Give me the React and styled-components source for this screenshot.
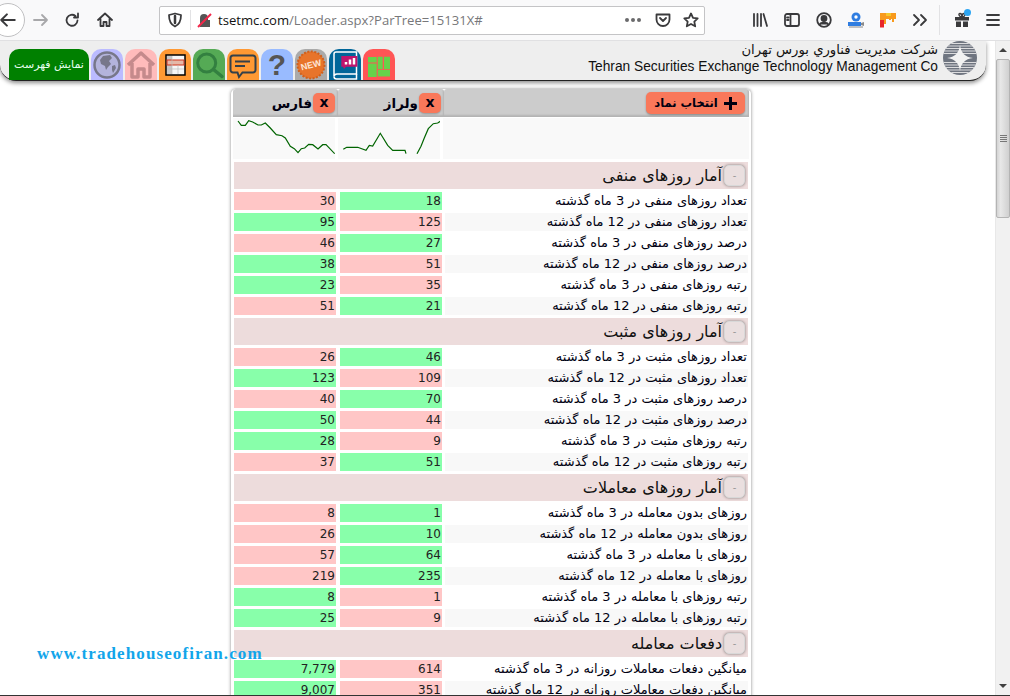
import styled, { createGlobalStyle } from 'styled-components'

const Global = createGlobalStyle`
    html, body {
        margin: 0;
        padding: 0;
        height: 100%;
        overflow: hidden;
        background: #fff;
        font-family: "DejaVu Sans", sans-serif;
    }
`

const sections = [
    {
        title: 'آمار روزهای منفی',
        rows: [
            ['تعداد روزهای منفی در 3 ماه گذشته', '18', 'g', '30', 'r'],
            ['تعداد روزهای منفی در 12 ماه گذشته', '125', 'r', '95', 'g'],
            ['درصد روزهای منفی در 3 ماه گذشته', '27', 'g', '46', 'r'],
            ['درصد روزهای منفی در 12 ماه گذشته', '51', 'r', '38', 'g'],
            ['رتبه روزهای منفی در 3 ماه گذشته', '35', 'r', '23', 'g'],
            ['رتبه روزهای منفی در 12 ماه گذشته', '21', 'g', '51', 'r'],
        ],
    },
    {
        title: 'آمار روزهای مثبت',
        rows: [
            ['تعداد روزهای مثبت در 3 ماه گذشته', '46', 'g', '26', 'r'],
            ['تعداد روزهای مثبت در 12 ماه گذشته', '109', 'r', '123', 'g'],
            ['درصد روزهای مثبت در 3 ماه گذشته', '70', 'g', '40', 'r'],
            ['درصد روزهای مثبت در 12 ماه گذشته', '44', 'r', '50', 'g'],
            ['رتبه روزهای مثبت در 3 ماه گذشته', '9', 'r', '28', 'g'],
            ['رتبه روزهای مثبت در 12 ماه گذشته', '51', 'g', '37', 'r'],
        ],
    },
    {
        title: 'آمار روزهای معاملات',
        rows: [
            ['روزهای بدون معامله در 3 ماه گذشته', '1', 'g', '8', 'r'],
            ['روزهای بدون معامله در 12 ماه گذشته', '10', 'g', '26', 'r'],
            ['روزهای با معامله در 3 ماه گذشته', '64', 'g', '57', 'r'],
            ['روزهای با معامله در 12 ماه گذشته', '235', 'g', '219', 'r'],
            ['رتبه روزهای با معامله در 3 ماه گذشته', '1', 'r', '8', 'g'],
            ['رتبه روزهای با معامله در 12 ماه گذشته', '9', 'r', '25', 'g'],
        ],
    },
    {
        title: 'دفعات معامله',
        rows: [
            ['میانگین دفعات معاملات روزانه در 3 ماه گذشته', '614', 'r', '7,779', 'g'],
            ['میانگین دفعات معاملات روزانه در 12 ماه گذشته', '351', 'r', '9,007', 'g'],
        ],
    },
]

const farsPoints = '4,2 7.3,6.3 11.3,6.3 14.7,1.7 18.7,3 24,6 27.3,6 31.3,4 36.3,9 42.3,15.7 48,16.7 51.3,19 56.3,27.3 60.3,29.7 64,33.7 67.3,29.7 70.7,29 74.7,25.3 78.7,25.7 84,30 88.7,25.7 92,25.7 100.7,34.7'
const volrazA = '4.3,30.3 7.7,28.3 18.7,28.3 27,31.3 30.3,26.3 33.7,27 41.3,14.3 48.7,26.3 53.7,31.3 66,31.3 67,34.7'
const volrazB = '78,34.7 82,27.3 85.3,19 89.3,9.7 94.3,4.7 98.7,4 101.3,2.3'

const Page = styled.div`
    height: 696px;
    display: flex;
    flex-direction: column;
    overflow: hidden;
`

const Toolbar = styled.div`
    height: 40px;
    flex: none;
    display: flex;
    align-items: center;
    background: #f9f9fa;
    border-bottom: 1px solid #e0e0e2;
    color: #3a3a3c;
    position: relative;
`

const BackCircle = styled.div`
    width: 32px;
    height: 32px;
    margin: 0 8px 0 -9px;
    flex: none;
    border-radius: 50%;
    border: 1px solid #c0c0c2;
    background: #fff;
    display: flex;
    align-items: center;
    justify-content: center;
`

const NavIcon = styled.div`
    width: 16px;
    height: 16px;
    flex: none;
    margin-right: ${p => p.$gap ?? 16}px;
    color: ${p => p.$color || '#3a3a3c'};
    svg { display: block; }
`

const UrlBar = styled.div`
    width: 546px;
    height: 29px;
    margin-left: 46px;
    margin-right: 47px;
    flex: none;
    box-sizing: border-box;
    background: #fff;
    border: 1px solid #c4c4c6;
    border-radius: 2px;
    display: flex;
    align-items: center;
    padding: 0 5px 0 7px;
`

const UrlText = styled.div`
    font-family: "Open Sans", sans-serif;
    font-size: 13.1px;
    color: #77777a;
    margin-left: 5px;
    flex: 1;
    white-space: nowrap;
    b { font-weight: 400; color: #111; }
`

const Divider = styled.div`
    width: 1px;
    height: 20px;
    background: #e2e2e4;
    margin: 0 6px 0 -1px;
`

const Dots = styled.div`
    display: flex;
    gap: 2px;
    margin-right: 14px;
    span { width: 4px; height: 4px; border-radius: 50%; background: #6a6a6c; }
`

const ToolbarSep = styled.div`
    width: 1px;
    height: 30px;
    background: #e2e2e4;
    margin: 0 14px 0 -5px;
`

const GiftDot = styled.span`
    position: absolute;
    left: 964px;
    top: 9px;
    width: 7px;
    height: 7px;
    border-radius: 50%;
    background: #2ea6f2;
`

const Viewport = styled.div`
    flex: 1;
    display: flex;
    min-height: 0;
    position: relative;
`

const Main = styled.div`
    flex: 1;
    min-width: 0;
    overflow: hidden;
`

const BottomEdge = styled.div`
    height: 1px;
    flex: none;
    background: #333;
`

const Scrollbar = styled.div`
    width: 15px;
    flex: none;
    background: #f1f1f1;
    border-left: 1px solid #e8e8e8;
    box-sizing: border-box;
    display: flex;
    flex-direction: column;
    align-items: center;
`

const ScrollArrow = styled.div`
    height: 18px;
    display: flex;
    align-items: center;
    justify-content: center;
    margin-top: ${p => (p.$down ? 'auto' : '0')};
    &::before {
        content: '';
        border-left: 4px solid transparent;
        border-right: 4px solid transparent;
        border-bottom: ${p => (p.$down ? 'none' : '4px solid #404040')};
        border-top: ${p => (p.$down ? '4px solid #404040' : 'none')};
    }
`

const ScrollThumb = styled.div`
    width: 14px;
    height: 159px;
    box-sizing: border-box;
    background: linear-gradient(to right, #d4d4d4, #e8e8e8 30%, #d0d0d0);
    border: 1px solid #b4b4b4;
    border-radius: 2px;
    display: flex;
    align-items: center;
    justify-content: center;
    &::before {
        content: '';
        width: 7px;
        height: 7px;
        background: repeating-linear-gradient(to bottom, #777 0 1px, transparent 1px 2px);
    }
`

const HeaderBar = styled.div`
    width: 986px;
    height: 40px;
    box-sizing: border-box;
    background: #eee;
    border-bottom: 1px solid #222;
    border-radius: 0 0 16px 16px;
    box-shadow: 0 2px 4px rgba(0, 0, 0, 0.45);
    display: flex;
    align-items: flex-start;
    justify-content: space-between;
    padding: 0 9px 0 9px;
`

const Tabs = styled.div`
    display: flex;
    gap: 2px;
    margin-top: 8px;
`

const ListTab = styled.div`
    width: 80px;
    height: 31px;
    background: #008000;
    color: #e8fff0;
    border-radius: 10px 10px 0 0;
    font-size: 11px;
    display: flex;
    align-items: center;
    justify-content: center;
    white-space: nowrap;
`

const Tab = styled.div`
    width: 32px;
    height: 31px;
    background: ${p => p.$bg};
    border-radius: 10px 10px 0 0;
    display: flex;
    align-items: center;
    justify-content: center;
    svg { display: block; }
`

const QuestionMark = styled.span`
    font-family: "Liberation Sans", sans-serif;
    font-weight: 700;
    font-size: 30px;
    line-height: 31px;
    color: #555;
`

const Brand = styled.div`
    display: flex;
    align-items: center;
    gap: 5px;
    height: 34px;
`

const BrandText = styled.div`
    display: flex;
    flex-direction: column;
    align-items: flex-end;
    color: #111;
    line-height: 17px;
`

const BrandFa = styled.div`
    font-size: 13.2px;
`

const BrandEn = styled.div`
    font-family: "Liberation Sans", sans-serif;
    font-size: 13.75px;
`

const Panel = styled.div`
    width: 522px;
    margin: 7px 0 0 230px;
    box-sizing: border-box;
    border: 1px solid #d0d0d0;
    border-bottom: none;
    border-radius: 6px 6px 0 0;
    padding: 0 2px 0 2px;
    box-shadow: 0 0 3px rgba(0, 0, 0, 0.25);
`

const HeadRow = styled.div`
    display: grid;
    grid-template-columns: 105px 106px 1fr;
    height: 28px;
`

const HeadCell = styled.div`
    background: #ccc;
    box-shadow: inset -1px -2px 2px rgba(0, 0, 0, 0.12);
    border-radius: 3px 3px 0 0;
    display: flex;
    align-items: center;
    justify-content: flex-end;
    padding-right: ${p => (p.$end ? 4 : 3)}px;
    gap: 1px;
`

const SymbolName = styled.span`
    font-weight: 700;
    font-size: 13.5px;
    color: #001;
`

const CloseBtn = styled.div`
    width: 22px;
    height: 20px;
    border-radius: 5px;
    background: #f9785a;
    box-shadow: 0 1px 2px rgba(0, 0, 0, 0.25);
    font-family: "DejaVu Sans", sans-serif;
    font-weight: 700;
    font-size: 14px;
    color: #001;
    display: flex;
    align-items: center;
    justify-content: center;
    padding-bottom: 2px;
    box-sizing: border-box;
`

const SelectBtn = styled.div`
    width: 99px;
    height: 22px;
    border-radius: 5px;
    background: #f9785a;
    box-shadow: 0 1px 2px rgba(0, 0, 0, 0.3);
    display: flex;
    align-items: center;
    justify-content: center;
    gap: 6px;
    font-weight: 700;
    font-size: 11.5px;
    color: #001;
    white-space: nowrap;
`

const ChartRow = styled.div`
    display: grid;
    grid-template-columns: 102px 102px 1fr;
    column-gap: 3px;
    height: 41px;
    margin-top: 1px;
`

const ChartCell = styled.div`
    background: #f9f9f9;
    svg { display: block; }
`

const SectionTitle = styled.div`
    height: 27px;
    margin: 3px 1px 3px 1px;
    background: #eddcdc;
    direction: rtl;
    display: flex;
    align-items: center;
    padding-right: 3px;
    font-size: 16px;
    color: #111;
    white-space: nowrap;
`

const Collapse = styled.div`
    width: 21px;
    height: 21px;
    box-sizing: border-box;
    border-radius: 5px;
    background: #eadfdf;
    border: 1px solid #d8d8d8;
    box-shadow: 0 0 3px rgba(0, 0, 0, 0.45);
    color: #999;
    font-size: 10px;
    display: flex;
    align-items: center;
    justify-content: center;
    margin-left: 2px;
`

const Row = styled.div`
    display: grid;
    grid-template-columns: 102px 102px 1fr;
    column-gap: 4px;
    height: 18px;
    margin: 0 1px 3px;
`

const ValueCell = styled.div`
    background: ${p => (p.$tone === 'g' ? '#88ffaa' : '#ffc6c6')};
    font-size: 12px;
    line-height: 18px;
    color: #222;
    text-align: right;
    padding-right: 1px;
`

const LabelCell = styled.div`
    background: ${p => (p.$odd ? '#f8f8f8' : '#fff')};
    direction: rtl;
    font-size: 13px;
    line-height: 18px;
    color: #001;
    padding-right: 1px;
    margin-left: -1px;
    white-space: nowrap;
`

const Watermark = styled.div`
    position: absolute;
    left: 37px;
    top: 603px;
    font-family: "Liberation Serif", serif;
    font-weight: 700;
    font-size: 17px;
    letter-spacing: 1.1px;
    color: #12a5ea;
`

const Icon = ({ children, size = 16 }) => (
    <svg width={size} height={size} viewBox="0 0 16 16" fill="none" stroke="currentColor" strokeWidth="1.8" strokeLinecap="round" strokeLinejoin="round">
        {children}
    </svg>
)

const BrowserBar = () => (
    <Toolbar>
        <BackCircle>
            <Icon size={18}><path d="M14 8H2M7 3L2 8l5 5" /></Icon>
        </BackCircle>
        <NavIcon $color="#a8a8aa" $gap={15}><Icon><path d="M1 8h13M9 3l5 5-5 5" /></Icon></NavIcon>
        <NavIcon $gap={17}><Icon><path d="M13.5 8.5A5.5 5.5 0 1 1 11.5 4M14 1.5V5.5H10" /></Icon></NavIcon>
        <NavIcon $gap={0}><Icon><path d="M1 8l7-6.5L15 8M3.5 7v7h3v-4h3v4h3V7" /></Icon></NavIcon>
        <UrlBar>
            <NavIcon $gap={8}>
                <Icon><path d="M8 1.5l6 1.5c0 6-1.5 9.5-6 11.5C3.5 12.5 2 9 2 3z" /><path d="M8 4v7" strokeWidth="2.5" /></Icon>
            </NavIcon>
            <Divider />
            <NavIcon $gap={0}>
                <svg width="16" height="16" viewBox="0 0 16 16">
                    <path d="M3 8V6a4 4 0 0 1 8 0v2h2v7H3z" fill="#555" />
                    <path d="M1 15L14 2" stroke="#f2264a" strokeWidth="2" />
                </svg>
            </NavIcon>
            <UrlText><b>tsetmc.com</b>/Loader.aspx?ParTree=15131X#</UrlText>
            <Dots><span /><span /><span /></Dots>
            <NavIcon $gap={12}>
                <Icon><path d="M1.5 2.5h13v5a6.5 6.5 0 0 1-13 0z" /><path d="M5 6l3 3 3-3" /></Icon>
            </NavIcon>
            <NavIcon $gap={0}>
                <Icon><path d="M8 1.5l2 4.3 4.7.6-3.400 3.200.9 4.700L8 12l-4.200 2.300.9-4.700L1.300 6.400 6 5.800z" /></Icon>
            </NavIcon>
        </UrlBar>
        <NavIcon><Icon><path d="M2 2v12M5.5 2v12M9 2v12M11.5 2L15 14" /></Icon></NavIcon>
        <NavIcon><Icon><rect x="1" y="2" width="14" height="12" rx="2" /><path d="M6.5 2v12M3 5.5h1.5M3 8h1.5" /></Icon></NavIcon>
        <NavIcon>
            <Icon>
                <circle cx="8" cy="8" r="6.8" />
                <circle cx="8" cy="6.5" r="2.5" fill="currentColor" />
                <path d="M3.800 12.500c1-2.500 7.400-2.500 8.400 0" fill="currentColor" />
            </Icon>
        </NavIcon>
        <NavIcon>
            <svg width="16" height="16" viewBox="0 0 16 16">
                <circle cx="8" cy="5" r="4.5" fill="#2f7de1" />
                <circle cx="8" cy="5" r="1.7" fill="#fff" />
                <rect x="0" y="10" width="13" height="4" fill="#2f7de1" />
                <path d="M13 11l3-1v4l-3-1z" fill="#8a8a8a" />
                <path d="M1 15h14" stroke="#8a8a8a" />
            </svg>
        </NavIcon>
        <NavIcon>
            <svg width="16" height="16" viewBox="0 0 16 16">
                <path d="M0 1h16v6h-2v3h-2V7h-1v1H9V7H6v5H4v3H0z" fill="#f89a1c" />
                <path d="M0 8h4v7.500H0z" fill="#e8262a" />
                <path d="M6 1h5v3H6z" fill="#f6c82c" />
            </svg>
        </NavIcon>
        <NavIcon><Icon><path d="M2 3l5 5-5 5M9 3l5 5-5 5" /></Icon></NavIcon>
        <ToolbarSep />
        <NavIcon $gap={15}>
            <svg width="16" height="16" viewBox="0 0 16 16">
                <path d="M1 5h14v3.500H1zM2 9.500h5V15H2zM9 9.500h5V15H9z" fill="#3a3a3c" />
                <path d="M8 5C5 5 4 1.500 6 1.500S8 5 8 5zm0 0c3 0 4-3.500 2-3.500S8 5 8 5z" fill="none" stroke="#3a3a3c" strokeWidth="1.4" />
            </svg>
        </NavIcon>
        <NavIcon $gap={0}><Icon><path d="M2 3h12M2 8h12M2 13h12" /></Icon></NavIcon>
        <GiftDot />
    </Toolbar>
)

const Globe = () => (
    <svg width="30" height="30" viewBox="0 0 30 30">
        <circle cx="15" cy="15" r="12.5" fill="#b4b4dc" stroke="#77778a" strokeWidth="2.5" />
        <path d="M11 6l7-1 2 3-3 3 2 3-3 3-2 3-1-4-4-2-1-4zM20 16l3-1 1 3-3 5-1-3z" fill="#77778a" />
    </svg>
)

const House = () => (
    <svg width="30" height="30" viewBox="0 0 30 30">
        <path d="M2 15L15 3l13 12M6 13v14h6v-8h6v8h6V13" fill="none" stroke="#c58a8c" strokeWidth="3.5" strokeLinejoin="round" />
    </svg>
)

const Sheet = () => (
    <svg width="21" height="22" viewBox="0 0 21 22">
        <rect x="1" y="1" width="19" height="20" fill="#f7f7f7" stroke="#000" strokeWidth="1.5" />
        <rect x="2" y="2" width="5" height="18" fill="#c8c8c8" />
        <rect x="2" y="6" width="17" height="5" fill="#e6b8a8" stroke="#d0341c" />
        <path d="M2 15h17M7 2v18M13 11v9" stroke="#bbb" strokeWidth=".7" />
    </svg>
)

const Search = () => (
    <svg width="32" height="31" viewBox="0 0 32 31">
        <circle cx="13.7" cy="14" r="9" fill="none" stroke="#338040" strokeWidth="3" />
        <path d="M20.500 20.500l8.500 7" stroke="#338040" strokeWidth="3.5" strokeLinecap="round" />
    </svg>
)

const Chat = () => (
    <svg width="32" height="31" viewBox="0 0 32 31">
        <path d="M6 6.500h20a2.500 2.500 0 0 1 2.500 2.500v12a2.500 2.500 0 0 1-2.500 2.500H15.500L12 28l-1.500-4.500H6A2.500 2.500 0 0 1 3.500 21V9A2.500 2.500 0 0 1 6 6.500z" fill="none" stroke="#33404a" strokeWidth="2" />
        <path d="M8 12.500h15M8 17h10" stroke="#33404a" strokeWidth="2" />
    </svg>
)

const NewBadge = () => (
    <svg width="30" height="30" viewBox="0 0 30 30">
        <circle cx="15" cy="15" r="13.5" fill="#e8742a" stroke="#d0601c" strokeWidth="2" strokeDasharray="2 1.5" />
        <text x="15" y="18" textAnchor="middle" fontFamily="Liberation Sans" fontWeight="700" fontSize="9" fill="#fde6d6" transform="rotate(-15 15 15)">NEW</text>
    </svg>
)

const Book = () => (
    <svg width="32" height="31" viewBox="0 0 32 31">
        <path d="M7 3h20.500v22H8a3 3 0 0 0-3 2.500V5a2 2 0 0 1 2-2z" fill="none" stroke="#fff" strokeWidth="1.5" />
        <path d="M5 27.500A2.500 2.500 0 0 0 7.500 30h20v-5" fill="none" stroke="#fff" strokeWidth="1.5" />
        <path d="M12.300 7h16v10.700H17l-2 2.300-1-2.300h-1.700z" fill="#c0146c" />
        <path d="M17 15.500v-2.500M21 15.500v-5M25 15.500V9" stroke="#fff" strokeWidth="2.5" />
    </svg>
)

const Blocks = () => (
    <svg width="32" height="31" viewBox="0 0 32 31">
        <path d="M5 8h8.700v5.500H5zM5 14.500h8.700V28H5zM14.700 7.700h5v12.600h-5zM21 7.700h6v12.600h-6zM14.700 21H27v6.500H14.700z" fill="#66d24a" />
    </svg>
)

const Logo = () => (
    <svg width="34" height="34" viewBox="0 0 34 34">
        <defs>
            <clipPath id="disc"><circle cx="17" cy="17" r="17" /></clipPath>
        </defs>
        <g clipPath="url(#disc)">
            <rect width="34" height="34" fill="#6f7580" />
            {[2, 4.5, 7, 9.5, 12, 21, 23.5, 26, 28.5, 31].map(y => <rect key={y} x="0" y={y} width="34" height="1" fill="#dcdcde" />)}
        </g>
        <path d="M17 4c1 8 5 12 13 13-8 1-12 5-13 13-1-8-5-12-13-13 8-1 12-5 13-13z" fill="#f2f2f2" />
    </svg>
)

const Header = () => (
    <HeaderBar>
        <Tabs>
            <ListTab>نمایش فهرست</ListTab>
            <Tab $bg="#bbbbff"><Globe /></Tab>
            <Tab $bg="#ffbbbb"><House /></Tab>
            <Tab $bg="#ff9933"><Sheet /></Tab>
            <Tab $bg="#55aa55"><Search /></Tab>
            <Tab $bg="#ff9933"><Chat /></Tab>
            <Tab $bg="#99bbff"><QuestionMark>?</QuestionMark></Tab>
            <Tab $bg="#aaaaaa"><NewBadge /></Tab>
            <Tab $bg="#006699"><Book /></Tab>
            <Tab $bg="#ff5555"><Blocks /></Tab>
        </Tabs>
        <Brand>
            <BrandText>
                <BrandFa>شرکت مديريت فناوري بورس تهران</BrandFa>
                <BrandEn>Tehran Securities Exchange Technology Management Co</BrandEn>
            </BrandText>
            <Logo />
        </Brand>
    </HeaderBar>
)

const Spark = ({ lines }) => (
    <svg width="102" height="41" viewBox="-1 -1 102 41">
        {lines.map(pts => <polyline key={pts} points={pts} fill="none" stroke="#006400" strokeWidth="1.2" />)}
    </svg>
)

const Section = ({ title, rows }) => (
    <>
        <SectionTitle>
            <Collapse>-</Collapse>
            {title}
        </SectionTitle>
        {rows.map((r, i) => (
            <Row key={r[0]}>
                <ValueCell $tone={r[4]}>{r[3]}</ValueCell>
                <ValueCell $tone={r[2]}>{r[1]}</ValueCell>
                <LabelCell $odd={i % 2 === 1}>{r[0]}</LabelCell>
            </Row>
        ))}
    </>
)

const App = () => (
    <Page>
        <Global />
        <BrowserBar />
        <Viewport>
            <Main>
                <Header />
                <Panel>
                    <HeadRow>
                        <HeadCell>
                            <SymbolName>فارس</SymbolName>
                            <CloseBtn>x</CloseBtn>
                        </HeadCell>
                        <HeadCell>
                            <SymbolName>ولراز</SymbolName>
                            <CloseBtn>x</CloseBtn>
                        </HeadCell>
                        <HeadCell $end>
                            <SelectBtn>
                                <span>انتخاب نماد</span>
                                <svg width="13" height="13" viewBox="0 0 13 13"><path d="M6.5 0v13M0 6.5h13" stroke="#001" strokeWidth="3" /></svg>
                            </SelectBtn>
                        </HeadCell>
                    </HeadRow>
                    <ChartRow>
                        <ChartCell><Spark lines={[farsPoints]} /></ChartCell>
                        <ChartCell><Spark lines={[volrazA, volrazB]} /></ChartCell>
                        <ChartCell />
                    </ChartRow>
                    {sections.map(s => <Section key={s.title} {...s} />)}
                </Panel>
            </Main>
            <Scrollbar>
                <ScrollArrow />
                <ScrollThumb />
                <ScrollArrow $down />
            </Scrollbar>
            <Watermark>www.tradehouseofiran.com</Watermark>
        </Viewport>
        <BottomEdge />
    </Page>
)

export default App
